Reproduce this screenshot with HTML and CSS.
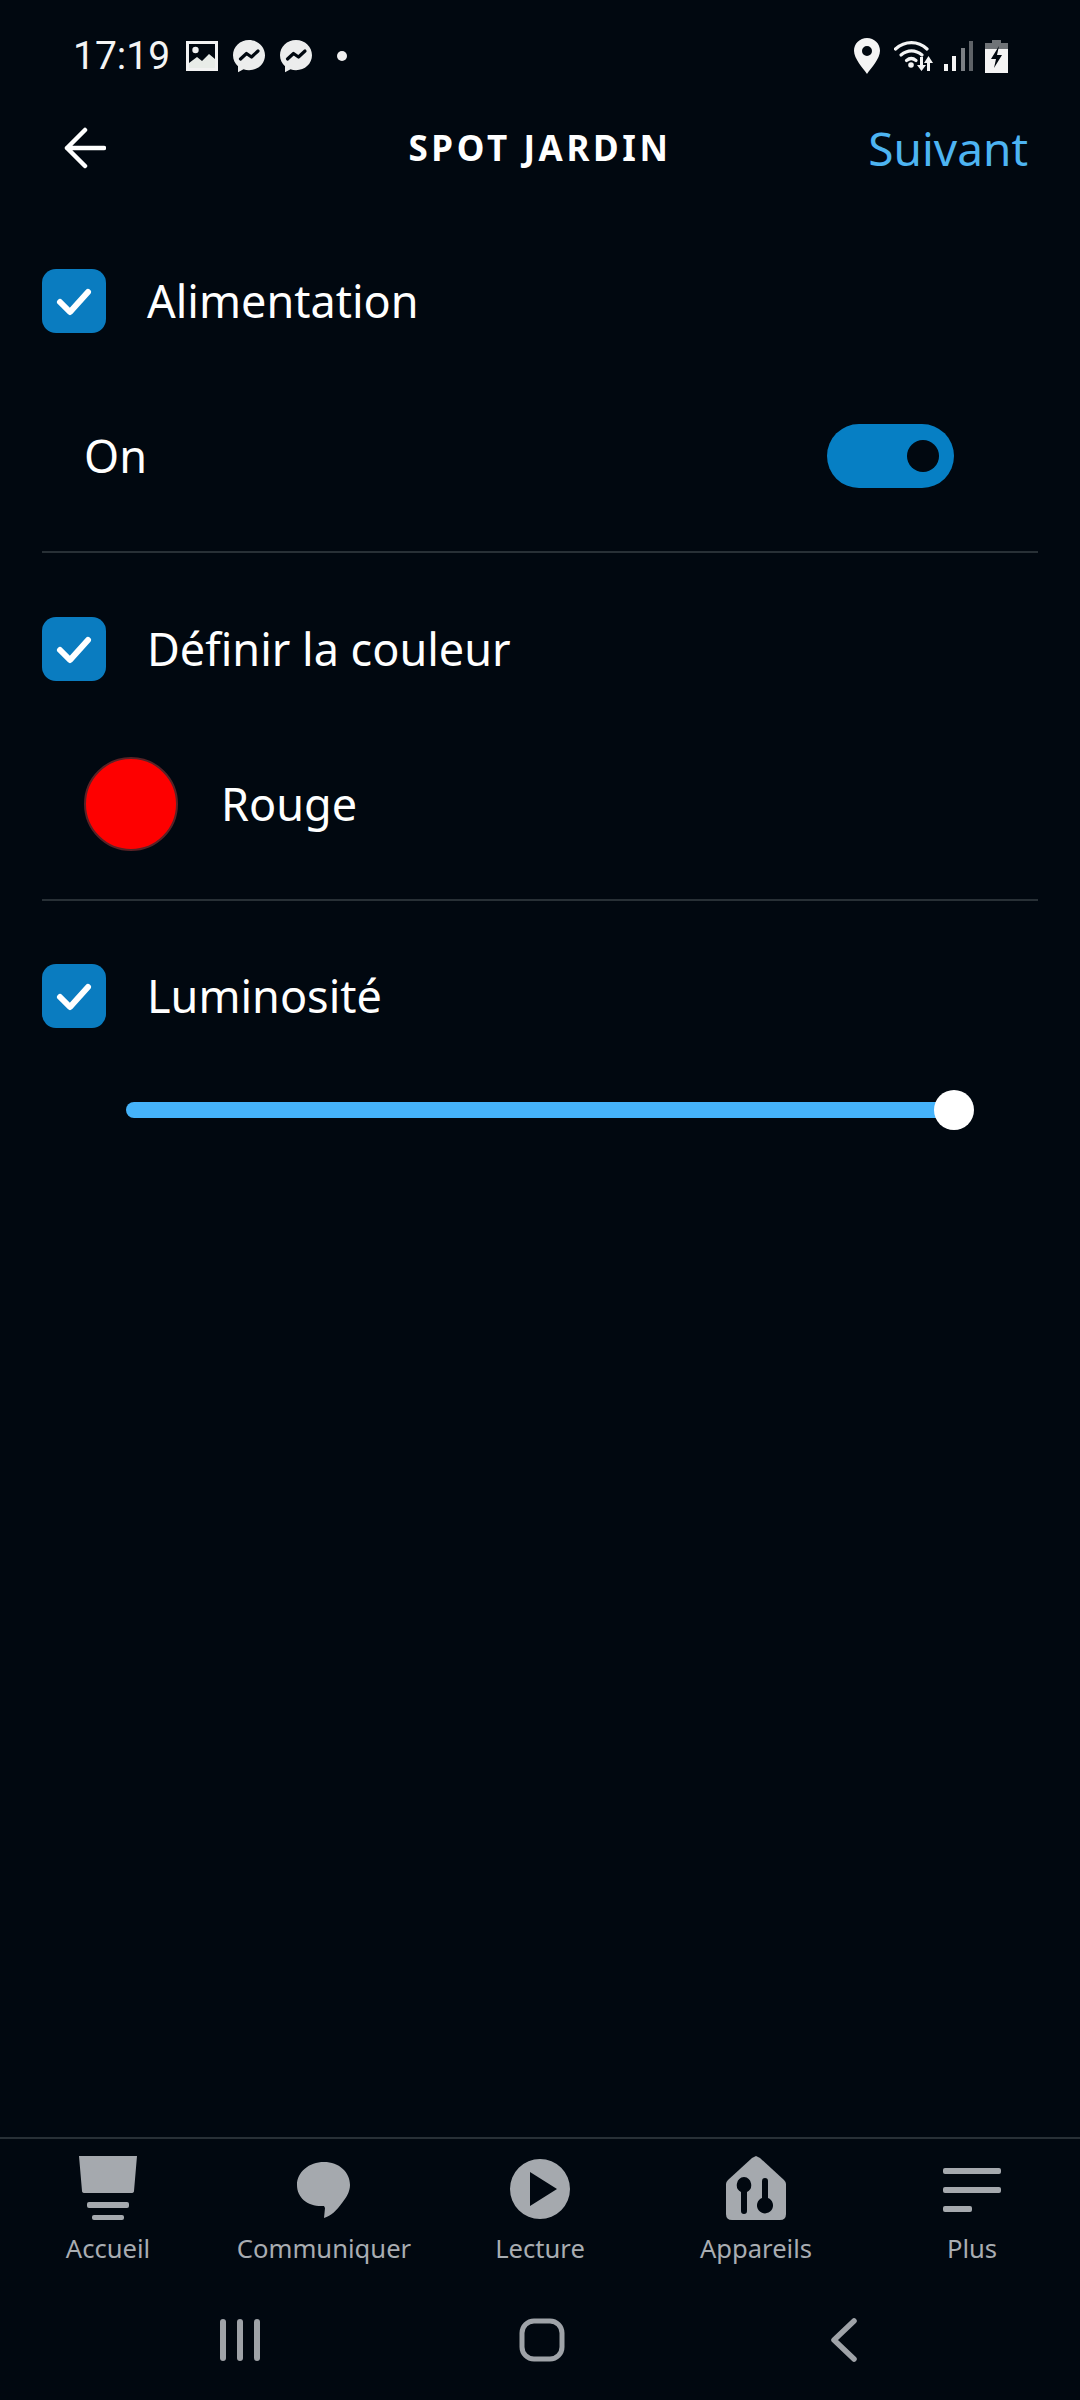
FILE: index.html
```html
<!DOCTYPE html>
<html lang="fr">
<head>
<meta charset="utf-8">
<title>Spot jardin</title>
<link rel="stylesheet" href="styles.css">
</head>
<body>
<div class="screen">
  <div class="status">
    <div class="status-left">
      <span class="time">17:19</span>
      <svg class="ic-img" viewBox="0 0 32 30"><rect width="32" height="30" fill="#f2f2f2"/><rect x="3" y="3" width="26" height="24" fill="#010810"/><circle cx="9.500" cy="9" r="3.200" fill="#f2f2f2"/><path fill="#e8ece8" d="M3 22l8-6 5 4 7-7 6 5v9H3z"/></svg>
      <svg class="ic-msg" viewBox="0 0 32 33"><path fill="#eceded" d="M16 0C7 0 0 6.800 0 15.300c0 4.500 2 8.400 5 11v6l5.500-3c1.700.6 3.500.9 5.500.9 9 0 16-6.500 16-14.900C32 6.800 25 0 16 0z"/><path fill="none" stroke="#010810" stroke-width="3.200" stroke-linejoin="round" stroke-linecap="round" d="M7.500 19l6-5.500 5 3.500 6.500-6"/></svg>
      <svg class="ic-msg" viewBox="0 0 32 33"><path fill="#eceded" d="M16 0C7 0 0 6.800 0 15.300c0 4.500 2 8.400 5 11v6l5.500-3c1.700.6 3.500.9 5.500.9 9 0 16-6.500 16-14.900C32 6.800 25 0 16 0z"/><path fill="none" stroke="#010810" stroke-width="3.200" stroke-linejoin="round" stroke-linecap="round" d="M7.500 19l6-5.500 5 3.500 6.500-6"/></svg>
      <span class="dot"></span>
    </div>
    <div class="status-right">
      <svg class="ic-pin" viewBox="0 0 26 36"><path fill-rule="evenodd" fill="#f4f4f4" d="M13 0C5.800 0 0 5.600 0 12.800 0 21 9 30 13 36c4-6 13-15 13-23.200C26 5.600 20.200 0 13 0zm0 8a5 5 0 1 1 0 10 5 5 0 0 1 0-10z"/></svg>
      <svg class="ic-wifi" viewBox="0 0 41 32"><g fill="none" stroke="#f4f4f4" stroke-width="3.200" stroke-linecap="round"><path d="M1.500 9C11 .5 24 .5 33 9"/><path d="M7 15c6.500-5.500 14.500-5.500 21 0"/><path d="M12.500 20.500c3-2.500 6.500-2.500 9.500 0"/></g><circle cx="17" cy="25" r="2.800" fill="#f4f4f4"/><path fill="#f4f4f4" d="M26 17h3v8h3l-4.500 6-4.500-6h3zM36 31h-3v-8h-3l4.500-7 4.500 7h-3z"/></svg>
      <svg class="ic-signal" viewBox="0 0 29 30"><rect x="0" y="23" width="4" height="7" fill="#f4f4f4"/><rect x="8" y="15" width="4" height="15" fill="#f4f4f4"/><rect x="17" y="7" width="4" height="23" fill="#7b7f84"/><rect x="25" y="0" width="4" height="30" fill="#5e6267"/></svg>
      <svg class="ic-batt" viewBox="0 0 23 33"><path fill="#6f7377" d="M7 0h9v3h7v9H0V3h7z"/><rect y="9" width="23" height="24" fill="#f4f4f4"/><path fill="#010810" d="M14 6L6 19h5l-2 9 8-13h-5z"/></svg>
    </div>
  </div>

  <header class="topbar">
    <svg class="back" viewBox="0 0 42 42"><path fill="none" stroke="#fff" stroke-width="4.500" stroke-linecap="round" stroke-linejoin="round" d="M40 21H3M21 3L3 21l18 18"/></svg>
    <h1 class="title">SPOT JARDIN</h1>
    <span class="next">Suivant</span>
  </header>

  <main class="content">
    <section class="section">
      <div class="head">
        <span class="check"><svg viewBox="0 0 64 64"><path d="M18 33l10 10 18-20" fill="none" stroke="#fff" stroke-width="6" stroke-linecap="round" stroke-linejoin="round"/></svg></span>
        <span class="label">Alimentation</span>
      </div>
      <div class="body body-between">
        <span class="label">On</span>
        <span class="toggle"><span class="knob"></span></span>
      </div>
    </section>
    <section class="section">
      <div class="head">
        <span class="check"><svg viewBox="0 0 64 64"><path d="M18 33l10 10 18-20" fill="none" stroke="#fff" stroke-width="6" stroke-linecap="round" stroke-linejoin="round"/></svg></span>
        <span class="label">Définir la couleur</span>
      </div>
      <div class="body">
        <span class="swatch"></span>
        <span class="label">Rouge</span>
      </div>
    </section>
    <section class="section section-last">
      <div class="head">
        <span class="check"><svg viewBox="0 0 64 64"><path d="M18 33l10 10 18-20" fill="none" stroke="#fff" stroke-width="6" stroke-linecap="round" stroke-linejoin="round"/></svg></span>
        <span class="label">Luminosité</span>
      </div>
      <div class="slider">
        <span class="track"></span>
        <span class="thumb"></span>
      </div>
    </section>
  </main>

  <nav class="tabs">
    <div class="tab">
      <svg class="tab-ic" viewBox="0 0 72 64"><path fill="#a5a9ae" d="M7 0h58l-3 35q0 2-3 2H13q-3 0-3-2z"/><rect x="15" y="46" width="42" height="6" rx="2" fill="#a5a9ae"/><rect x="20" y="59" width="32" height="5" rx="2" fill="#a5a9ae"/></svg>
      <span class="tab-label">Accueil</span>
    </div>
    <div class="tab">
      <svg class="tab-ic" viewBox="0 0 72 64"><path fill="#a5a9ae" d="M36 6C21 6 9 16 9 29c0 13 11 22 27 21l1 2-1 10c7-2 13-8 18-15 4-5 8-11 8-18C62 16 51 6 36 6z"/></svg>
      <span class="tab-label">Communiquer</span>
    </div>
    <div class="tab">
      <svg class="tab-ic" viewBox="0 0 72 64"><path fill-rule="evenodd" fill="#a5a9ae" d="M36 3a30 30 0 1 1 0 60 30 30 0 0 1 0-60zM26 16v34l27-17z"/></svg>
      <span class="tab-label">Lecture</span>
    </div>
    <div class="tab">
      <svg class="tab-ic" viewBox="0 0 72 64"><path fill="#a5a9ae" d="M36 0l4 2 24 22q2 2 2 4v30q0 6-6 6H12q-6 0-6-6V28q0-2 2-4L32 2z"/><path fill="#010810" d="M24 21a8 8 0 0 1 3 15v19q0 3-3 3t-3-3V36a8 8 0 0 1 3-15zM45 22q3 0 3 3v17a8 8 0 1 1-6 0V25q0-3 3-3z"/></svg>
      <span class="tab-label">Appareils</span>
    </div>
    <div class="tab">
      <svg class="tab-ic" viewBox="0 0 72 64"><rect x="7" y="12" width="58" height="6" rx="2" fill="#a5a9ae"/><rect x="7" y="31" width="58" height="6" rx="2" fill="#a5a9ae"/><rect x="7" y="50" width="29" height="6" rx="2" fill="#a5a9ae"/></svg>
      <span class="tab-label">Plus</span>
    </div>
  </nav>

  <div class="sysbar">
    <svg class="sys-recent" viewBox="0 0 42 44"><rect x="1" y="1" width="6" height="42" rx="3" fill="#9fa3a8"/><rect x="18" y="1" width="6" height="42" rx="3" fill="#9fa3a8"/><rect x="35" y="1" width="6" height="42" rx="3" fill="#9fa3a8"/></svg>
    <svg class="sys-home" viewBox="0 0 46 44"><rect x="3" y="3" width="40" height="38" rx="12" fill="none" stroke="#9fa3a8" stroke-width="5"/></svg>
    <svg class="sys-back" viewBox="0 0 26 44"><path d="M23 3L3 22l20 19" fill="none" stroke="#9fa3a8" stroke-width="5.500" stroke-linecap="round" stroke-linejoin="round"/></svg>
  </div>
</div>
</body>
</html>
```
FILE: styles.css
```css
* { box-sizing: border-box; }
html, body { margin: 0; padding: 0; background: #010810; }
body { font-family: "Noto Sans", "Open Sans", sans-serif; color: #fff; }
svg { display: block; flex: none; }

.screen { width: 1080px; height: 2400px; display: flex; flex-direction: column; background: #010810; overflow: hidden; }

.status { height: 112px; flex: none; display: flex; justify-content: space-between; align-items: center; padding: 0 72px 0 73px; }
.status-left, .status-right { display: flex; align-items: center; }
.time { font-family: Roboto, sans-serif; font-size: 39px; line-height: 44px; color: #f4f4f4; }
.ic-img { width: 32px; height: 30px; margin-left: 16px; }
.ic-msg { width: 32px; height: 33px; margin-left: 15px; }
.dot { width: 10px; height: 10px; border-radius: 50%; background: #f0f0f0; margin-left: 25px; }
.ic-pin { width: 26px; height: 36px; }
.ic-wifi { width: 41px; height: 32px; margin-left: 14px; }
.ic-signal { width: 29px; height: 30px; margin-left: 9px; }
.ic-batt { width: 23px; height: 33px; margin-left: 12px; }

.topbar { height: 72px; flex: none; display: grid; grid-template-columns: 1fr auto 1fr; align-items: center; padding: 0 52px; }
.back { width: 42px; height: 42px; margin-left: 12px; }
.title { margin: 0; font-size: 35px; font-weight: 700; letter-spacing: 3.6px; line-height: 44px; }
.next { justify-self: end; font-size: 46px; line-height: 60px; color: #4db4f2; }

.content { flex: 1; padding-top: 21px; }
.section { margin: 0 42px; padding: 64px 0 48px; border-bottom: 2px solid #283036; }
.section-last { border-bottom: 0; padding-top: 63px; }
.head { display: flex; align-items: center; height: 64px; gap: 41px; }
.check { width: 64px; height: 64px; border-radius: 14px; background: #0a7cc0; flex: none; }
.check svg { width: 64px; height: 64px; }
.label { font-size: 45px; line-height: 60px; color: #fff; }

.body { display: flex; align-items: center; min-height: 94px; margin-top: 76px; padding-left: 42px; gap: 43px; }
.body-between { justify-content: space-between; padding-right: 84px; }
.toggle { width: 127px; height: 64px; border-radius: 32px; background: #067fc4; display: flex; align-items: center; justify-content: flex-end; padding-right: 15px; }
.knob { width: 32px; height: 32px; border-radius: 50%; background: #010810; }
.swatch { width: 94px; height: 94px; border-radius: 50%; background: #fe0000; border: 2px solid #5a2226; flex: none; }

.slider { display: flex; align-items: center; margin: 62px 64px 0 84px; }
.track { flex: 1; height: 16px; border-radius: 8px 0 0 8px; background: #45b3fa; }
.thumb { width: 40px; height: 40px; border-radius: 50%; background: #fff; margin-left: -2px; flex: none; }

.tabs { height: 150px; flex: none; display: grid; grid-template-columns: repeat(5, 1fr); border-top: 2px solid #283036; padding-top: 17px; }
.tab { display: flex; flex-direction: column; align-items: center; }
.tab-ic { width: 72px; height: 64px; }
.tab-label { font-size: 25.600px; line-height: 34px; margin-top: 12px; color: #a9adb2; }

.sysbar { height: 113px; flex: none; display: flex; align-items: flex-start; padding: 31px 0 0 219px; }
.sys-recent { width: 42px; height: 44px; }
.sys-home { width: 46px; height: 44px; margin: 0 266px 0 258px; }
.sys-back { width: 26px; height: 44px; }
```
